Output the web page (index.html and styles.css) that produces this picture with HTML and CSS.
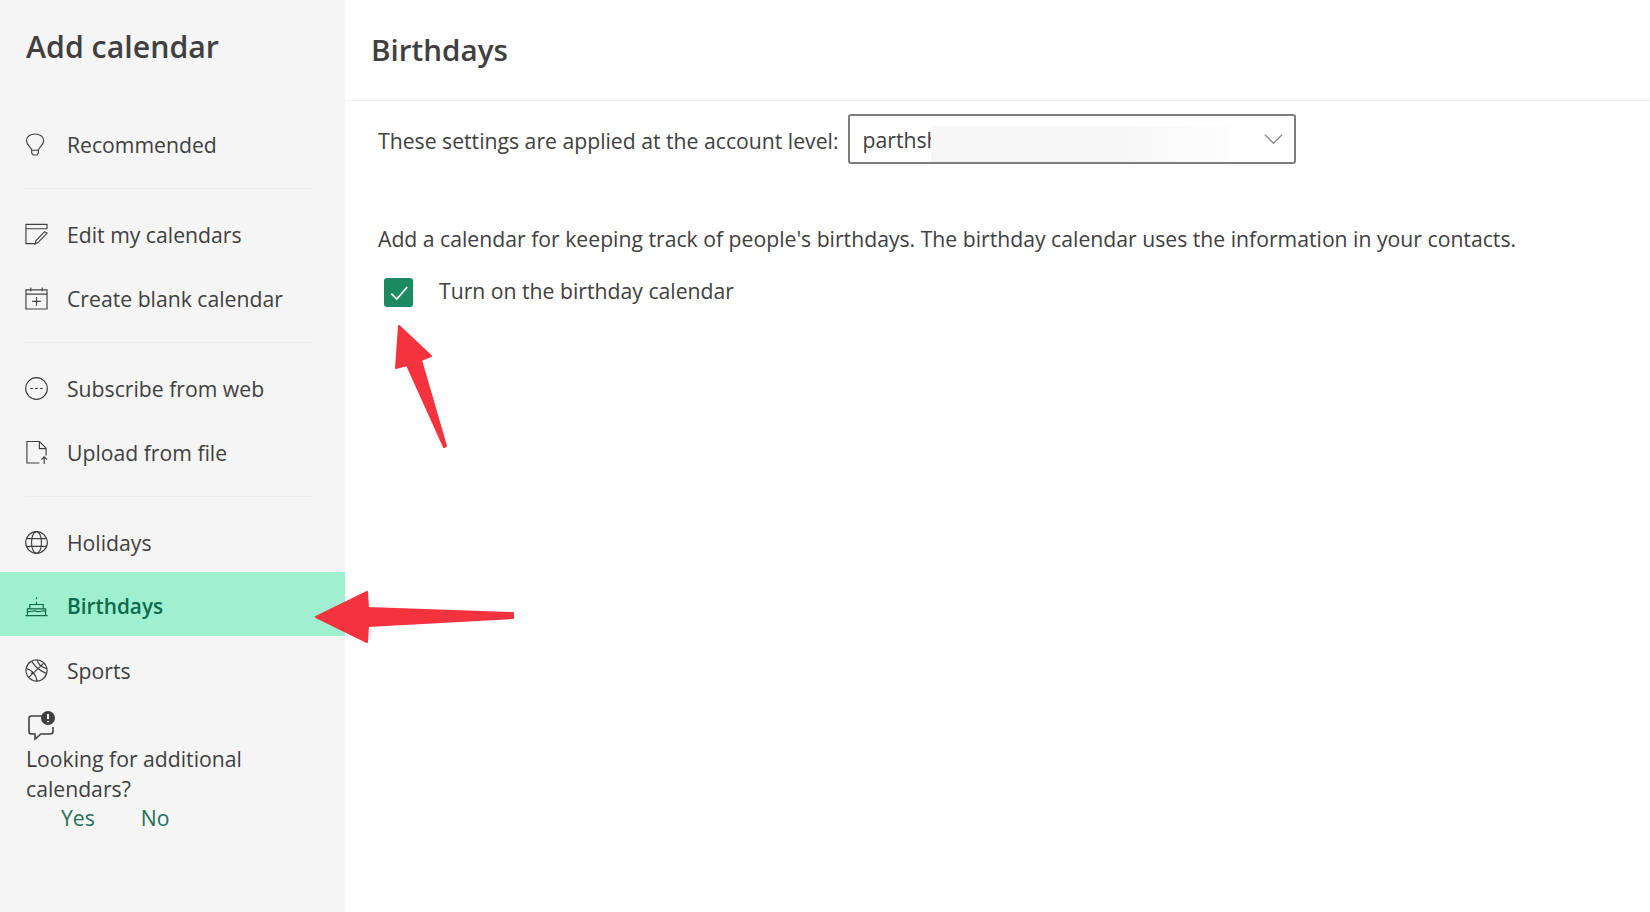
FILE: index.html
```html
<!DOCTYPE html>
<html>
<head>
  <title>Add calendar</title>
  <link rel="stylesheet" href="styles.css">
</head>
<body>
  <div class="app">
    <aside class="sidebar">
      <h1>Add calendar</h1>

      <nav class="menu">
        <a class="item">
          <svg viewBox="0 0 24 24"><path d="M7 18c0-3-5.500-5-5.500-10.500C1.500 3.800 5.500 1 10.500 1s9 2.800 9 6.500C19.500 13 14 15 14 18zM7 18v3l1.500 2h4l1.500-2v-3"/></svg>
          Recommended
        </a>
        <hr>
        <a class="item">
          <svg viewBox="0 0 24 24"><path d="M12 21.500H1v-20h22v4.500M1 6h22M23 10.500 14 20l-3.500 2 1-3.700 9-9.300z"/></svg>
          Edit my calendars
        </a>
        <a class="item">
          <svg viewBox="0 0 24 24"><path d="M1 3h22v20H1zM1 7.500h22M6 .5v4M18 .5v4M12 10.500v9M7.500 15h9"/></svg>
          Create blank calendar
        </a>
        <hr>
        <a class="item">
          <svg viewBox="0 0 24 24"><circle cx="12" cy="12" r="11.300"/><path d="M5.500 12h3M10.500 12h3M15.500 12h3"/></svg>
          Subscribe from web
        </a>
        <a class="item">
          <svg viewBox="0 0 24 24"><path d="M15 23H2V.5h13l7 7V15M15 1v7h7M20 24v-7M17 19.500l3-3 3 3"/></svg>
          Upload from file
        </a>
        <hr>
        <a class="item">
          <svg viewBox="0 0 24 24"><circle cx="12" cy="12" r="11.300"/><ellipse cx="12" cy="12" rx="5.200" ry="11.300"/><path d="M1.500 8h21M1.500 16h21"/></svg>
          Holidays
        </a>
        <a class="item active">
          <svg viewBox="0 0 24 24"><path d="M.5 22.500h23M2.500 22.500v-7h19v7M5 15.500v-4.500h14v4.500M2.500 18c3 1.800 6.300-1.800 9.500 0s6.500-1.800 9.500 0M12 11V8M12 3.500v2"/></svg>
          Birthdays
        </a>
        <a class="item">
          <svg viewBox="0 0 24 24"><circle cx="12" cy="12" r="11" transform="rotate(-30 12 12)"/><path d="M20 4 3.500 19.500M7 2.500c2.500 4 8 10 15.500 12.500M1.500 10c4 .5 10 5 11 13.500M13 1c0 3.500 3.500 7.500 10 9M6.500 15.500l1.500-2"/></svg>
          Sports
        </a>
      </nav>

      <div class="feedback">
        <svg class="feedback-icon" viewBox="0 0 30 30"><path d="M16 5H5.500Q3 5 3 7.500v13Q3 23 5.500 23H9v5l6-5h9q3 0 3-2.500V16"/><circle cx="22" cy="7" r="7"/><path class="mark" d="M22 3v5M22 10v1.200"/></svg>
        <p>Looking for additional calendars?</p>
        <div class="answers">
          <a>Yes</a>
          <a>No</a>
        </div>
      </div>
    </aside>

    <main class="content">
      <header class="title-bar">
        <h2>Birthdays</h2>
      </header>

      <div class="panel">
        <div class="account-row">
          <span class="account-label">These settings are applied at the account level:</span>
          <div class="select">
            <span>parthsh</span>
            <div class="blur"></div>
            <svg viewBox="0 0 20 12"><path d="M1 1.500 10 10.500 19 1.500"/></svg>
          </div>
        </div>

        <p class="description">Add a calendar for keeping track of people's birthdays. The birthday calendar uses the information in your contacts.</p>

        <label class="check-row">
          <span class="checkbox">
            <svg viewBox="0 0 20 20"><path d="M3 10.500 8 15.500 17.500 4.500"/></svg>
          </span>
          Turn on the birthday calendar
        </label>
      </div>
    </main>
  </div>

  <!-- red annotation arrows on top of the screenshot -->
  <svg class="arrows" viewBox="0 0 1650 912">
    <path d="M399 326 431 356 421 360 446 446 444 447 407 365 396 368z"/>
    <path d="M316 617 367 592 368 608 513 613 513 618 368 626 367 642z"/>
  </svg>
</body>
</html>
```

FILE: styles.css
```css
* {
  box-sizing: border-box;
}

body {
  margin: 0;
  height: 912px;
  overflow: hidden;
  position: relative;
  background-color: #fff;
  color: #404040;
  font-family: 'Open Sans', sans-serif;
  font-size: 21.2px;
}

.app {
  display: flex;
  height: 100%;
}

.sidebar {
  width: 345px;
  flex-shrink: 0;
  background-color: #f5f5f5;
  padding-top: 26px;
}

h1 {
  margin: 0 0 44px 26px;
  font-size: 30.3px;
  line-height: 42px;
  font-weight: 600;
}

.menu hr {
  margin: 12px 32px 13px 25px;
  border: none;
  border-top: 1px solid #ebebeb;
  height: 1px;
}

.item {
  display: flex;
  align-items: center;
  gap: 19px;
  height: 64px;
  padding-left: 25px;
  white-space: nowrap;
}

.item svg {
  width: 23px;
  height: 23px;
  flex-shrink: 0;
  fill: none;
  stroke: #404040;
  stroke-width: 1.2;
}

.item.active {
  margin: -2px 0 2px;
  padding-top: 3px;
  background-color: #9ff0d0;
  color: #0e6a4a;
  font-size: 20.8px;
  font-weight: 600;
}

.item.active svg {
  stroke: #0e6a4a;
}

.feedback {
  padding: 9px 26px 0;
}

.feedback p {
  margin: 3px 0 0;
  width: 250px;
  line-height: 30px;
}

.feedback-icon {
  display: block;
  width: 30px;
  height: 30px;
  fill: none;
  stroke: #404040;
  stroke-width: 1.6;
}

.feedback-icon circle {
  fill: #404040;
  stroke: none;
}

.feedback-icon .mark {
  stroke: #f5f5f5;
  stroke-width: 2;
}

.answers {
  display: flex;
  gap: 46px;
  padding-left: 35px;
  line-height: 28px;
  color: #23705a;
}

.content {
  flex: 1;
}

.title-bar {
  height: 101px;
  padding: 29px 0 0 26px;
  border-bottom: 1px solid #efefef;
}

h2 {
  margin: 0;
  font-size: 29.6px;
  line-height: 42px;
  font-weight: 600;
}

.panel {
  padding: 13px 0 0 33px;
}

.account-row {
  display: flex;
  align-items: center;
  gap: 10px;
}

.account-label {
  padding-top: 2px;
}

.select {
  position: relative;
  display: flex;
  align-items: center;
  justify-content: space-between;
  width: 448px;
  height: 50px;
  padding: 0 12px;
  border: 2px solid #7d7d7d;
  border-radius: 3px;
}

.select svg {
  width: 19px;
  height: 12px;
  margin-right: -1px;
  fill: none;
  stroke: #8a8a8a;
  stroke-width: 1.4;
}

/* blurred out part of the account name */
.blur {
  position: absolute;
  top: 10px;
  bottom: 0;
  left: 81px;
  width: 300px;
  background: linear-gradient(90deg, #f6f6f6, #f7f7f7 60%, #fdfdfd);
}

.description {
  margin: 60px 0 0;
  line-height: 30px;
  white-space: nowrap;
}

.check-row {
  display: flex;
  align-items: flex-start;
  gap: 26px;
  margin-top: 22px;
  padding-left: 6px;
}

.checkbox {
  display: flex;
  align-items: center;
  justify-content: center;
  width: 29px;
  height: 29px;
  margin-top: 2px;
  border-radius: 3px;
  background-color: #1b8a62;
}

.checkbox svg {
  width: 22px;
  height: 22px;
  fill: none;
  stroke: #fff;
  stroke-width: 1.5;
}

.arrows {
  position: absolute;
  top: 0;
  left: 0;
  width: 1650px;
  height: 912px;
  pointer-events: none;
  fill: #f5333f;
  stroke: #f5333f;
  stroke-width: 2;
  stroke-linejoin: round;
}
```
